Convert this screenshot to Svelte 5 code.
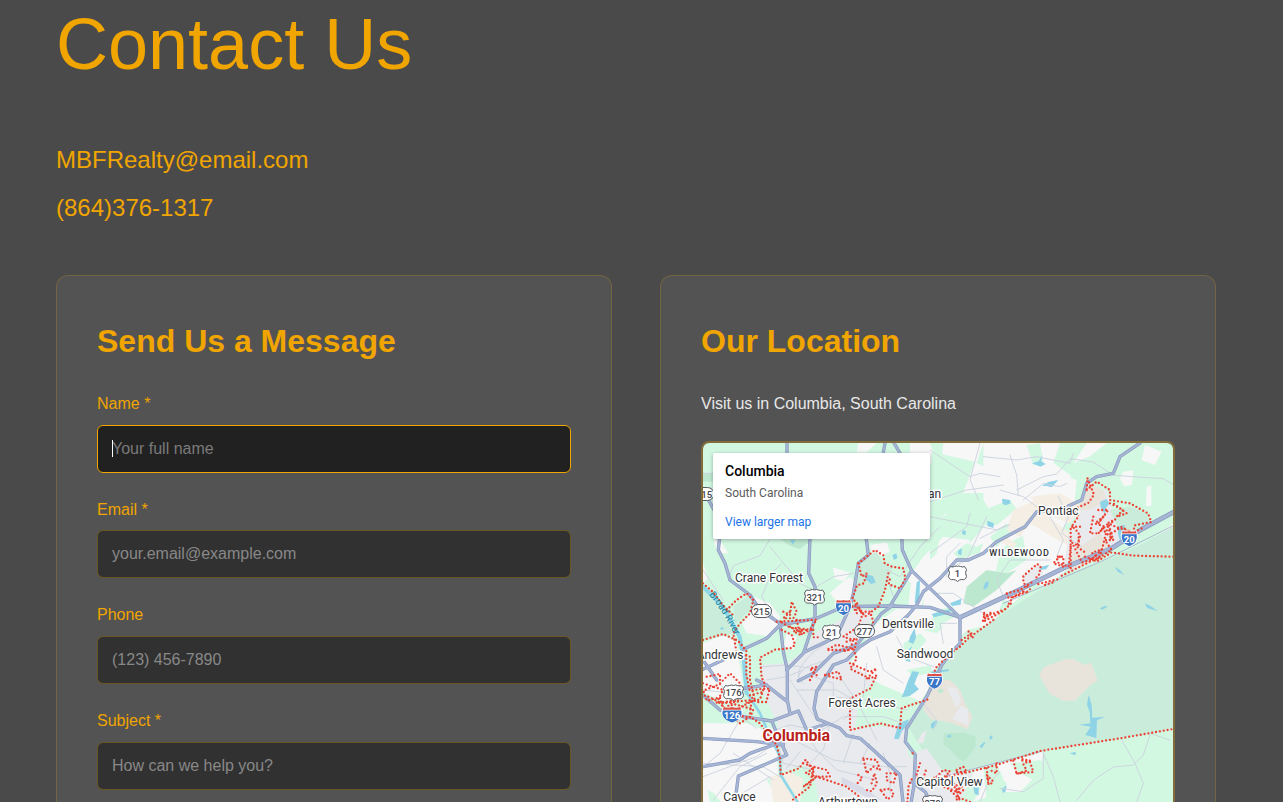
<script>
  const fields = [
    { id: 'name', label: 'Name *', hint: 'Your full name', type: 'text', active: true },
    { id: 'email', label: 'Email *', hint: 'your.email@example.com', type: 'email' },
    { id: 'phone', label: 'Phone', hint: '(123) 456-7890', type: 'tel' },
    { id: 'subject', label: 'Subject *', hint: 'How can we help you?', type: 'text' }
  ];

  // Terrain is drawn on a grid three times finer than the map's pixels.
  const whites = [
    'M505 39h55l-30 28h-30z', 'M660 39h60l20 55-50 20-30-40z', 'M428 412l52 16-18 26-26-6z',
    'M440 470l40-30 20 20-15 60-45-5-20-25z', 'M540 345l50-8 10 28-25 12-30-10z',
    'M700 380l60-60 80 10-20 70-60 30-50 60-60-40z', 'M39 395l14 50-14 16z', 'M70 330l20 0 25 40-30 0z',
    'M190 500l50 20 30 40-20 60-80-10-14-30 34-40z',
    'M665 440l40 40-14 60-36-10z', 'M560 580l60-44 120-10 70 36 5 80-75 80-30 100-140-60-90-60z',
    'M740 470l60-50 90-70 40 20-30 130-80 60z',
    'M39 640l60-24 40 20 20 130-30 60-91-40z', 'M39 880l170 0 50 60 10 176H39z',
    'M290 610l30 10-10 40-30-10z'
  ];
  const eastWhites = [
    'M760 39h120l-20 60 80 40-40 50-80 0-40 60-60 30v-90l30-60z',
    'M880 39h230l-20 60 55 40-40 60-60 30-10 70-80 40-60 60 60 60-20 60-20 60-80 20-40 30-95-20v-230l80 10 60-50 70-80-30-50z',
    'M980 190l120-60 60 20-10 110-60 60 60 20-10 70-70 60-40-10-60 60-50-20 30-70 60-40z',
    'M1190 39h60l-50 40-50 20z', 'M1300 125l30-4-4 44-24 4-12-24z', 'M1370 170l14-4v62l-16 0z',
    'M1365 45l50 20-20 40-40-14z', 'M1390 330l60-50v50l-30 0z'
  ];
  const greens = [
    'M725 65l130 30-50 130-85 60z', 'M770 230l80-20 40 40-60 50-60-20z', 'M720 270l40 0-20 100-20 20z',
    'M880 240l80-30 20 26-60 50-50-10z', 'M790 370l40-30 30 10 20-12-10 30-60 20z',
    'M1010 45l40-5 10 60-30 6z', 'M900 320l50-40 20 20-50 50z', 'M940 380l30-16 16 16-40 40z',
    'M1130 245l60-20-4 50-50 14z', 'M240 620l40-10 0 40 20 10-60 20-20 60-30 20-10-60z',
    'M170 810l40 10 40 40 0 60-50-30-60-20z', 'M250 820l40-4 30 20-60 24z',
    'M600 930l60-70 60-90 20 40v170l-60-20-60 20z', 'M230 1050l40-20 20 30-40 20z', 'M52 1080l20 10 20 26H60z',
    'M480 1000l50 20 60 50-20 40-70-30z', 'M640 640l50-30 20 20-30 40-40 10z', 'M740 540l50-10 10 26-50 30-30-10z',
    'M650 720l70-14 10 20-60 14z', 'M700 570l60 20-20 20-40-10z'
  ];
  const capitol = [
    'M880 1010l40-6 20 40-30 72h-20z', 'M930 1040l20 20-14 56h-30z', 'M960 1000l90-10 30 30-50 30-40-20z', 'M840 1040l40 20-30 56h-20z'
  ];
  const water = [
    'M523 432l26 6 8 20-14 4-16-14z', 'M607 376l12-6 3 14-10 6z', 'M300 330h16l-7 14z',
    'M680 456l10-4-2 64-14 4z', 'M1026 100l20-6 12-20-5 20 14 8-16 8-14-6z',
    'M1055 168l20-12 30-6-20 22-14-4z', 'M936 206l24 4 2 10-14 6-10-4z', 'M892 272l20 8-2 14-18-6z',
    'M818 300l10 4-2 12-10-4z', 'M1230 215l20-8 8 14-10 12-4 20-12-22z', 'M1284 290l20-6 0 26-14 22-6-20z',
    'M1274 410l16 10 12 14-18-8z', 'M1364 520l18 8 22 16-32-10z', 'M884 460l12-8-2 20-14 8z', 'M804 362l12-8-2 22-10-4z',
    'M780 520l34-14-2 18-26 4z', 'M725 552l60-16-10 16-44 10z', 'M1230 535l16-8 6 4-16 8z', 'M1054 410l24-6-10 14-20 2z',
    'M660 620l14-26 4 28-8 20-14-6z', 'M645 668l22-20-10 26 4 22-14-4z', 'M655 750l12-26 20 2-14 36 14 16-28 20-24 4 10-24z',
    'M612 926l14-46 30-12-4 20-16 14-10 26z', 'M1196 794l9 32 2 37 39-3-25 11-2 53-33-9 16-25-34-6 33-4-2-34-8-22z',
    'M723 882l12-10 8 0-8 20-12 4z', 'M868 950l14-14 4 2-10 16z', 'M850 1072l16 0 0 24-12-4z', 'M770 917l12-4 2 8-10 2z', 'M898 920l8-4 2 8-8 6z',
    'M936 1076l14-10-4 20-8 2z', 'M1138 970l20-4-2 10z', 'M88 596l10-6 4 10z', 'M720 725l54-8 4 6-50 8z'
  ];
  const lanes = [
    'M39 130l70 0 M39 420l60 90', 'M240 327l-30 50-80 30-15 40', 'M255 570l-40-70 30-70 30-30', 'M240 350l90 110 40 20',
    'M380 470l50-30 60-10', 'M590 420l40 20 60-90 30-30', 'M610 500l-20-60', 'M690 350l60-60', 'M770 440l0-60 40-40', 'M730 490l60 0 90 60',
    'M720 60l120 80 30-10 60 10', 'M870 39l-30 110 25 60', 'M720 215l110-35 110-15', 'M720 260l200 40 40-16',
    'M960 75l20 60 5 60', 'M880 80l100 10 60-10 100 20 10-30', 'M980 180l80-40 40-8 40-46 70 10 60 40 150 10 50 30',
    'M1000 210l60-50 50 10 20-10', 'M930 180l70 20 80 60 40 70-20 50', 'M1105 200l30 60-20 50 60 40', 'M870 325l80-40',
    'M720 370l110-80 10-40', 'M890 260l-60 130-40 20', 'M940 500l-20-50 40-60 120 0', 'M760 640l-10-60 50 0', 'M620 620l30 60 80 30', 'M560 650l20 70 60 40',
    'M60 725l50 60 50 80 40 30', 'M150 870l-60 100-50 40', 'M39 1040l160-60 70-50', 'M70 1110l80-100 80-40', 'M39 1000l180 10 50 30', 'M240 1040l-100 60',
    'M215 710l75-5 80 10 50-30', 'M300 750l60 90 40 60', 'M320 780l120 0 70 40', 'M340 900l40 60 60 60 120 30', 'M230 750l60-10 50-20',
    'M310 930l120 60 150 20 70 0', 'M250 890l30 110 90 20', 'M420 880l-20 80-60 60', 'M490 910l-30 90', 'M350 930l110-70 120 0 60 20',
    'M540 940l-30 60', 'M450 740l60 90 50 100', 'M530 700l-10 100-60 70', 'M420 800l110 10 120 30', 'M370 740l60 20 0 60',
    'M580 970l20 60 0 60', 'M325 740q10-30 55-40t60-50', 'M340 760q-30-20 0-60t70-60', 'M330 965l-40 50', 'M240 905l60-20 50 10',
    'M1060 970l30 70 20 76', 'M1380 910l60 20', 'M1380 915l-20 60-30 30-60 6-60 40-50 60', 'M1295 930l40 70 25 60-20 56',
    'M1060 965l0 80-60 40-70-10', 'M870 1116l20-50 40-40', 'M39 780l90 10 40-10', 'M130 970l120 80', 'M700 820l40 50-10 30'
  ];
  const highways = [
    'M291 39V75', 'M89 320l-4 40 20 40 15 50 60 45 30 45 60 40 10 85 12 55v90l8 40', 'M39 180l32 58',
    'M360 320l-4 110 19 40 0 95-33 100', 'M39 718l60-28M160 658l70-33 40-40 110-20 80-35 140-2 120 4 90 30',
    'M528 320l7 55-30 25-15 90-10 40-40 90-95 45-55 55', 'M635 310l2 50 28 62 65 63 80 77M665 422l-65 106', 'M585 39l-7 40M612 39l26 44',
    'M1350 39l-60 41-20 50-50 10-30 20-15 50-55 25-80 10-35 45-85 45-40 35-45 20-35 0-50 55-50 40-20 40-25 30-55 50-60 25-30 20-40 40-40 15-50 80-8 50 10 32 68 28 20 22 40 8 40 35 80 75 10 90',
    'M610 525l-35 25-35 45-40 50-70 25-60 60-45 22',
    'M39 795l51 45 70 20 85 13 80-30 25 57 60-18', 'M245 872l20 50M270 930l20 45-145 63-10 78', 'M39 925l161 10 80 10',
    'M39 1010l110-20 31-20 70-25 30-7', 'M160 775l70-10M200 750l30 16 62 49', 'M39 690l41 60',
    'M810 562v78l-25 25-30 40-20 45-25 50-60 95-4 40 30 40-4 90-10 60', 'M666 1056l40 30 14 30'
  ];
  const freeway = 'M810 562l135-62 185-90 135-55 95-60 100-54';
  const limits = [
    'M39 460l30 26 30 40 35 34M110 540l30-30 30-20 20 20-10 40-30 30-20 30 10 60 40 10 0 70 14 60-40 20',
    'M505 400l50-40 25 16 4 24 22 10 34 5 6 30-15 30-35-12 5-22',
    'M505 400l10 40 16-10-10 30-20 6-14 40 20 20M595 430l-10 50-20 50-40 30-20-30 10 20-20-30 6 30-20-30',
    'M280 545l20 10 5-40 15 30-10 20-30 0 20-20',
    'M260 575l120-6-20 30-60-6-30-20M275 600l30 14 10 30-10 10-50 5-45 24 5 60 10 20-15 45-40 10',
    'M300 590l40 20 30-14 0 26 20 0M320 570l10 44-20-10 40-4M335 600l0 20',
    'M39 630l60-18 45 20 25 30 0 70 10 50 40-6 20 0-10 40-30 0-20-20 40-10',
    'M50 740l40-8 0 30-50 20 10 30 40-10 10 40 30-20 60 16-10 25-50-10M39 760l60 20-20 40 60-10-40 30',
    'M90 760l30-30 30 30 0 50-60 10M55 800l40 20 90-10-5 40M100 830l50 50 30-20 30 20 30 40',
    'M500 605l20-60 20 0 10 30-10 30-20 0M490 600l-30 20 30 10-10 30-70 0 30-16 50 12 10 30-20 30 60 30 20-10-20 40-60 30 0 94 90-20 60 14 5-60 80-26',
    'M405 735l40-10 10 24-50-14M360 750l20-40-20 6 20 20M470 635l30-10-5 30-40 10M480 700l60 26 20-10-30 30',
    'M1450 380l-120-3-65-10-45 28-20-10M1220 385l-110 55M1065 465l30-10M1000 485l16 0-60 20-6-16',
    'M1190 180l30-25 40 25 0 30 60 10 54 30 10 26-50 10-4 20-50-14-20-10 16-14-20 10-20 80-10 30-20-20 30-10-30 30-30 10-30-60 20 10 0-40-20-20 20-30-15-20 45-20 16-24-20-50z',
    'M1225 240l30 0-30 40 15-20-25 20 30 10-20 20 30-30 15 50-40-40M1260 220l40 20-20 20 30-10-40-30M1265 310l30-20 30 20 40-20',
    'M1170 290l-28 0 0 130M1170 320l-10 30 30 20M1210 260l-10 50 30 0M1185 380l30 10 50-30-20-30 20 0-10-40',
    'M1142 350l-6 60-30-10-6-20 20 0 0 30-30-10 20-20M1020 478l-20-20 0-20 42-36 10 10-6 26-16 10M950 490l40-10 40-26',
    'M1045 462l65-16M1000 485l-30 15-14 22', 'M945 538l-55 20-10-12 6 20 20-20-24 14-4 16 62-33 30-30',
    'M910 570l-75 55-25 25-15 10-55 50-12 26M815 630l30-20-10-6 15 20',
    'M225 905l35 40 10 40 2 50 55-20 20-26 20 30-20 10 60 20 60 20 40 30',
    'M340 1000l30 10 0 40-30 20 40-30 40 0-10-20-40-10-10 60-40 30-20 16',
    'M520 985l40 5 10 30-20-10-20 20z M505 1035l12 10-14 14M545 1060l8-30 8 30-16 24-16-4M590 1030l30 0-10 30-20-10zM572 1080l30-4 10 20-20 12z',
    'M668 970l0 8M690 1000l-12 40 20 10 10-30M740 1040l20-20 20 4-20 20-30 0M800 1020l20-10 10 16-30 0M652 1116l4-50 10-20',
    'M780 1055l20 10 0 20-40-15M750 1050l40 40 20 20M810 1060l10 20-20 20 40 16M790 1060l10 30 10-20-10 40',
    'M770 1040l70-15 80-20 130-42 240-38 160-28M890 1015l6 50-6-30 20 20-12 10M920 1000l0 30-20-10M970 992l10 40 30-10-10-20 20-10-30-6M980 1030l50-4-10-30-30-6'
  ];

  const places = [
    { t: 'Crane Forest', x: 769, y: 582.4 }, { t: 'Pontiac', x: 1058.3, y: 515.4 },
    { t: 'Dentsville', x: 908, y: 628.4 }, { t: 'Sandwood', x: 925, y: 658.4 },
    { t: 'Forest Acres', x: 862, y: 707.4 }, { t: 'Capitol View', x: 949.4, y: 786.4 },
    { t: 'Cayce', x: 739.4, y: 801.4 }, { t: 'Arthurtown', x: 848, y: 806 },
    { t: 'St Andrews', x: 713, y: 659.4 }, { t: 'Killian', x: 925, y: 498.4 }
  ];
  const shields = [
    { n: '321', x: 814.5, y: 597, k: 'us' }, { n: '21', x: 831.5, y: 632.5, k: 'us' }, { n: '176', x: 733.5, y: 692.5, k: 'us' },
    { n: '1', x: 957.5, y: 573.5, k: 'us' }, { n: '378', x: 932.5, y: 803, k: 'us' },
    { n: '215', x: 761.5, y: 611, k: 'state' }, { n: '277', x: 864.5, y: 631, k: 'state' }, { n: '215', x: 704, y: 494, k: 'state' },
    { n: '20', x: 843.5, y: 607.5, k: 'inter' }, { n: '20', x: 1129.3, y: 538.5, k: 'inter' },
    { n: '77', x: 934.5, y: 681, k: 'inter' }, { n: '126', x: 732, y: 714.7, k: 'inter', w: 1.25 }
  ];
</script>

<main>
  <header>
    <h1>Contact Us</h1>
    <p>MBFRealty@email.com</p>
    <p>(864)376-1317</p>
  </header>

  <div class="columns">
    <section class="card">
      <h2>Send Us a Message</h2>
      <form>
        {#each fields as f}
          <div class="field">
            <label for={f.id}>{f.label}</label>
            <div class="control">
              <input id={f.id} type={f.type} placeholder={f.hint} class:active={f.active} />
              {#if f.active}<span class="caret"></span>{/if}
            </div>
          </div>
        {/each}
      </form>
    </section>

    <section class="card">
      <h2>Our Location</h2>
      <p class="visit">Visit us in Columbia, South Carolina</p>
      <div class="map">
        <svg width="470" height="359" viewBox="703 443 470 359">
          <g transform="translate(690 430) scale(.333333)">
            <path class="land" d="M0 0h1500v1200H0z" />
            {#each [...whites, ...eastWhites] as d}<path class="plain" {d} />{/each}
            {#each greens as d}<path class="land" {d} />{/each}
            <path class="wood" d="M39 130h50v25H39zM270 327h100l-40 30-30-10zM830 470l60-50 60 10 30-10-60 60-70 50-30-10z" />
            <path class="sand" d="M970 240l70-30 20 40 80 60 10 40-30-10-100-60-30 40-40-20zM1020 200l90-10 70 40-40 50-80-30zM930 335l40 20 10-14-30-20zM1410 370l40-70v80zM240 1040l60-14 40 20-10 70H250z" />
            <path class="town" d="M215 705l75-5 50-35 40-60 60-30 60-40 50-10 0 30-50 90 -20 50 60 50 30-10-60 60 -15 100 150-10 10 90 30 20v130H390l-20-100-30-20-60 20-20-150-20-40-25-60z" />
            <path class="town" d="M1140 300l60-120 50 0 20 70 90 20-60 50-70 60-110 30zM1000 440l50-40 10 30-50 40z" />
            <path class="park" d="M39 460l95 150-50 10-45 10zM130 530l55-42 10 36-60 60zM505 400l55-35 20 35 30 10-20 50-30 80-70-4zM1260 240l60-10 50 20 14 36-84 44z" />
            <path class="clay" d="M1160 240l40-80 40 20 10 30-50 30zM1140 370l90-60 30 40-40 40-90 40z" />
            <path class="park" d="M1450 290L1360 340L1265 385L1110 440L910 570L810 650L740 710L735 740L700 820L655 890L700 965L760 1035L920 1005L1050 963L1290 925L1450 897Z" />
            <path class="clay" d="M1047 735l16-24 60-23h30l30 17 20-7 20 53-28 20-40 41h-35l-40-20zM720 750l60 0 30 30 20 50 18 30-15 38-50-20-60-10-23-30z" />
            <path class="town" d="M770 770l30 5 14 40-15 20zM812 827l22 10 2 50-50-20zM695 910l15-10-10 40-20 0zM680 965l30-10 50 70 90 5-40 86H660z" />
            <path class="plain" d="M850 1024l70-20 140-38-10 60-60 60-60 0-80 30h-20z" />
            {#each capitol as d}<path class="land" {d} />{/each}
            <path class="wood" d="M762 910l60-2 34 10 2 30-34 46-16-6-34-36-14-8zM743 780l14-4 4 10-14 4z" />
            <path class="haze" d="M455 1040l60 30 60 40h-30l-90-50z" />
            {#each water as d}<path class="water" {d} />{/each}
            <path class="river wide" d="M39 470l60 60 50 90 12 70 9 100" />
            <path class="river" d="M165 780l45 70 35 80 25 50 2 55 50 80" />
            {#each lanes as d}<path class="lane" {d} />{/each}
            {#each highways as d}<path class="edge" {d} />{/each}
            <path class="edge big" d={freeway} />
            {#each highways as d}<path class="road" {d} />{/each}
            <path class="road big" d={freeway} />
            <path class="rail" d="M940 520l310-133 200-100M740 1045l310-80" />
            {#each limits as d}<path class="limit" {d} />{/each}
          </g>

          <path id="river-line" d="M709 595Q722 609 738 642" fill="none" />
          <text class="river-name"><textPath href="#river-line">Broad River</textPath></text>
          {#each places as p}<text class="place" x={p.x} y={p.y}>{p.t}</text>{/each}
          <text class="place district" x="1019.5" y="556">WILDEWOOD</text>

          {#each shields as s}
            <g transform="translate({s.x} {s.y})">
              {#if s.k === 'us'}
                <path class="plate" d={s.n.length === 3
                  ? 'M-8-7Q-6-6-4-7Q-2-8 0-7Q2-8 4-7Q6-6 8-7L10-4Q8-1 10 3Q9 7 5 6Q2 6 0 8Q-2 6-5 6Q-9 7-10 3Q-8-1-10-4Z'
                  : 'M-7-7Q-5-6-3-7Q-1-8 0-7Q1-8 3-7Q5-6 7-7L9-4Q7-1 9 3Q8 7 4 6Q2 6 0 8Q-2 6-4 6Q-8 7-9 3Q-7-1-9-4Z'} />
                <text class="num" y="3.5">{s.n}</text>
              {:else if s.k === 'state'}
                <rect class="plate" x="-10" y="-6.5" width="20" height="13" rx="6.5" />
                <text class="num" y="3.5">{s.n}</text>
              {:else}
                <g transform="scale({s.w ?? 1} 1)">
                  <path fill="#fff" d="M-7.5-8H7.5L8.6-3Q8.6 5 0 8.6Q-8.6 5-8.6-3Z" />
                  <path fill="#3a76c8" d="M-7.4-4.2H7.4Q9 4.5 0 7.8Q-9 4.5-7.4-4.2Z" />
                  <path fill="#dc5147" d="M-7.4-5L-6.6-7.6Q-3-6.4 0-7.6Q3-6.4 6.6-7.6L7.4-5Z" />
                </g>
                <text class="num light" y="4">{s.n}</text>
              {/if}
            </g>
          {/each}
          <text class="city" x="796.2" y="740.7">Columbia</text>
        </svg>
        <div class="info">
          <strong>Columbia</strong>
          <span>South Carolina</span>
          <a href="#map">View larger map</a>
        </div>
      </div>
    </section>
  </div>
</main>

<style>
  :global(body) {
    background: #4a4a4a;
    overflow: hidden;
  }
  main {
    box-sizing: border-box;
    height: 802px;
    padding: 1px 67px 0 56px;
    overflow: hidden;
    font-family: 'Liberation Sans', Arial, sans-serif;
    font-size: 16px;
    line-height: 1.6;
    color: #f0a500;
  }
  h1, h2, p { margin: 0; }
  h1 {
    margin-bottom: 49px;
    font-size: 72px;
    line-height: 86px;
    font-weight: 400;
  }
  header p {
    font-size: 24px;
    line-height: 48px;
  }
  .columns {
    display: grid;
    grid-template-columns: 1fr 1fr;
    gap: 48px;
    margin-top: 43px;
  }
  .card {
    box-sizing: border-box;
    height: 800px;
    padding: 40px;
    border: 1px solid rgba(240, 165, 0, 0.2);
    border-radius: 12px;
    background: rgba(255, 255, 255, 0.05);
  }
  h2 {
    margin-bottom: 24px;
    font-size: 32px;
  }
  .field { margin-bottom: 24px; }
  label {
    display: block;
    margin-bottom: 8px;
  }
  .control {
    position: relative;
    display: flex;
  }
  input {
    box-sizing: border-box;
    width: 100%;
    height: 48px;
    padding: 14px;
    border: 1px solid rgba(240, 165, 0, 0.3);
    border-radius: 6px;
    outline: none;
    background: rgba(0, 0, 0, 0.4);
    color: #fff;
    font: 16px 'Liberation Sans', Arial, sans-serif;
  }
  input::placeholder { color: #888; opacity: 1; }
  input.active {
    border-color: #f0a500;
    background: rgba(0, 0, 0, 0.6);
  }
  input.active::placeholder { color: #7a7a7a; }
  .caret {
    position: absolute;
    left: 15px;
    top: 15px;
    width: 1px;
    height: 17px;
    background: #fff;
  }
  .visit {
    margin-bottom: 24px;
    color: #e8e8e8;
  }
  .map {
    position: relative;
    border: 2px solid rgba(240, 165, 0, 0.3);
    border-radius: 8px;
    height: 400px;
    overflow: hidden;
    font-family: Roboto, sans-serif;
  }
  .map svg { display: block; }
  .info {
    position: absolute;
    left: 10px;
    top: 10px;
    box-sizing: border-box;
    width: 217px;
    height: 86px;
    padding: 9px 12px;
    display: flex;
    flex-direction: column;
    border-radius: 2px;
    background: #fff;
    box-shadow: 0 1px 4px rgba(0, 0, 0, 0.3);
    font-size: 12px;
    color: #5b5b5b;
  }
  .info strong {
    font-size: 14px;
    line-height: 18px;
    font-weight: 500;
    color: #000;
  }
  .info span { line-height: 16px; margin-top: 5px; }
  .info a {
    margin-top: 13px;
    line-height: 16px;
    color: #1a73e8;
    text-decoration: none;
  }
  .land { fill: #d2f8e2; }
  .plain { fill: #f7f7f8; }
  .wood { fill: #bde8d0; }
  .park { fill: #caecdb; }
  .sand { fill: #f4eee4; }
  .clay { fill: #e8e4dc; }
  .town { fill: #e8eaed; }
  .haze { fill: #d9dbe8; }
  .water { fill: #8fd3e7; }
  .river, .lane, .edge, .road, .rail, .limit {
    fill: none;
    stroke-linejoin: round;
    stroke-linecap: round;
  }
  .river { stroke: #8fd7e8; stroke-width: 8; }
  .river.wide { stroke-width: 12; }
  .lane { stroke: #ccd3de; stroke-width: 2.8; }
  .edge { stroke: #8496bd; stroke-width: 10; }
  .edge.big { stroke-width: 14; }
  .road { stroke: #a7b5d4; stroke-width: 6.5; }
  .road.big { stroke-width: 10; }
  .rail { stroke: #aeb8cf; stroke-width: 3; }
  .limit {
    stroke: #ea4335;
    stroke-width: 7;
    stroke-dasharray: 0 11.7;
  }
  text { font-family: Roboto, sans-serif; }
  .place, .city, .num { text-anchor: middle; }
  .place {
    font-size: 12px;
    fill: #303236;
    stroke: #fff;
    stroke-width: 2.8px;
    stroke-linejoin: round;
    paint-order: stroke;
  }
  .district {
    font-size: 9px;
    font-weight: 500;
    letter-spacing: 0.9px;
  }
  .city {
    font-size: 16px;
    font-weight: 700;
    letter-spacing: -0.1px;
    fill: #b9221b;
    stroke: #fff;
    stroke-width: 3px;
    stroke-linejoin: round;
    paint-order: stroke;
  }
  .river-name {
    font-size: 9.5px;
    fill: #16809a;
  }
  .plate {
    fill: #fff;
    stroke: #555a60;
    stroke-width: 1;
  }
  .num {
    font-size: 9.5px;
    font-weight: 500;
    fill: #44474c;
  }
  .num.light { fill: #fff; font-weight: 700; }
</style>
